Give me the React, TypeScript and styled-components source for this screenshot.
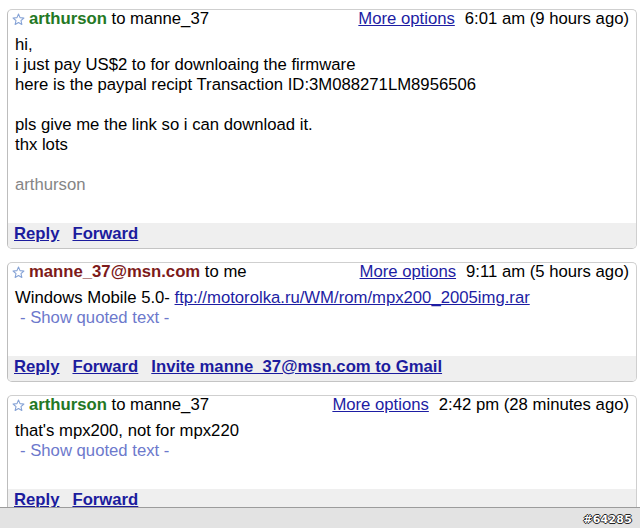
import React from "react";
import styled, { createGlobalStyle } from "styled-components";

const GlobalStyle = createGlobalStyle`
  html, body { margin: 0; padding: 0; background: #fff; }
  body { font-family: "Liberation Sans", Arial, sans-serif; font-size: 16.7px; color: #000; }
`;

const Page = styled.div`
  width: 640px;
  height: 528px;
  display: flex;
  flex-direction: column;
  overflow: hidden;
`;

const Main = styled.div`
  flex: 1;
  overflow: hidden;
  padding: 9px 3px 0 7px;
  display: flex;
  flex-direction: column;
  gap: 13px;
`;

const Card = styled.div`
  border: 1px solid #cfcfcf;
  border-left-color: #bdbdbd;
  border-bottom-color: #c4c4c4;
  border-radius: 5px;
  background: #fff;
  overflow: hidden;
  flex-shrink: 0;
`;

const Header = styled.div`
  height: 18px;
  line-height: 18px;
  display: flex;
  align-items: center;
  justify-content: space-between;
  padding: 0 7px 0 4px;
  white-space: nowrap;
`;

const Left = styled.div`
  display: flex;
  align-items: center;
  gap: 4px;
`;

const Right = styled.div`
  display: flex;
  align-items: center;
  gap: 10px;
`;

const Sender = styled.span<{ $tone: "green" | "red" }>`
  font-weight: bold;
  color: ${(p) => (p.$tone === "green" ? "#247824" : "#7d1a1a")};
`;

const Link = styled.a`
  color: #1d1da3;
  text-decoration: underline;
  cursor: pointer;
`;

const Time = styled.span`
  color: #000;
`;

const Body = styled.div`
  padding: 7px 7px 28px 7px;
  line-height: 20px;
`;

const Line = styled.div`
  min-height: 20px;
  white-space: pre;
`;

const Signature = styled.div`
  color: #858585;
  line-height: 20px;
`;

const Quoted = styled.div`
  color: #6d79cc;
  padding-left: 5px;
  line-height: 20px;
`;

const Footer = styled.div`
  height: 25px;
  line-height: 21px;
  background: #efefef;
  padding-left: 6px;
  display: flex;
  gap: 13px;
  white-space: nowrap;
`;

const Action = styled.a`
  color: #1c1c9e;
  font-weight: bold;
  text-decoration: underline;
  cursor: pointer;
`;

const StatusBar = styled.div`
  height: 20px;
  border-top: 1px solid #9c9c9c;
  background: #e3e3e3;
  display: flex;
  align-items: center;
  justify-content: flex-end;
  padding-right: 8px;
`;

const Watermark = styled.span`
  font-family: "DejaVu Sans", sans-serif;
  font-size: 11px;
  font-weight: bold;
  color: #fff;
  letter-spacing: 0.2px;
  text-shadow: -1px 0 #222, 1px 0 #222, 0 -1px #222, 0 1px #222;
  margin-top: 2px;
`;

const Star = () => (
  <svg width="13" height="13" viewBox="0 0 12 12">
    <path
      d="M6 1 L7.4 4.3 L11 4.6 L8.3 7 L9.1 10.6 L6 8.7 L2.9 10.6 L3.7 7 L1 4.6 L4.6 4.3 Z"
      fill="#fff"
      stroke="#86a3d6"
      strokeWidth="1"
      strokeLinejoin="round"
    />
  </svg>
);

type MsgProps = {
  sender: string;
  tone: "green" | "red";
  to: string;
  time: string;
  actions: string[];
  children: React.ReactNode;
};

const Message = ({ sender, tone, to, time, actions, children }: MsgProps) => (
  <Card>
    <Header>
      <Left>
        <Star />
        <span>
          <Sender $tone={tone}>{sender}</Sender> to {to}
        </span>
      </Left>
      <Right>
        <Link>More options</Link>
        <Time>{time}</Time>
      </Right>
    </Header>
    <Body>{children}</Body>
    <Footer>
      {actions.map((a) => (
        <Action key={a}>{a}</Action>
      ))}
    </Footer>
  </Card>
);

export default function App() {
  return (
    <Page>
      <GlobalStyle />
      <Main>
        <Message
          sender="arthurson"
          tone="green"
          to="manne_37"
          time="6:01 am (9 hours ago)"
          actions={["Reply", "Forward"]}
        >
          <Line>hi,</Line>
          <Line>i just pay US$2 to for downloaing the firmware</Line>
          <Line>here is the paypal recipt Transaction ID:3M088271LM8956506</Line>
          <Line> </Line>
          <Line>pls give me the link so i can download it.</Line>
          <Line>thx lots</Line>
          <Line> </Line>
          <Signature>arthurson</Signature>
        </Message>
        <Message
          sender="manne_37@msn.com"
          tone="red"
          to="me"
          time="9:11 am (5 hours ago)"
          actions={["Reply", "Forward", "Invite manne_37@msn.com to Gmail"]}
        >
          <Line>
            Windows Mobile 5.0- <Link>ftp://motorolka.ru/WM/rom/mpx200_2005img.rar</Link>
          </Line>
          <Quoted>- Show quoted text -</Quoted>
        </Message>
        <Message
          sender="arthurson"
          tone="green"
          to="manne_37"
          time="2:42 pm (28 minutes ago)"
          actions={["Reply", "Forward"]}
        >
          <Line>that's mpx200, not for mpx220</Line>
          <Quoted>- Show quoted text -</Quoted>
        </Message>
      </Main>
      <StatusBar>
        <Watermark>#64285</Watermark>
      </StatusBar>
    </Page>
  );
}
